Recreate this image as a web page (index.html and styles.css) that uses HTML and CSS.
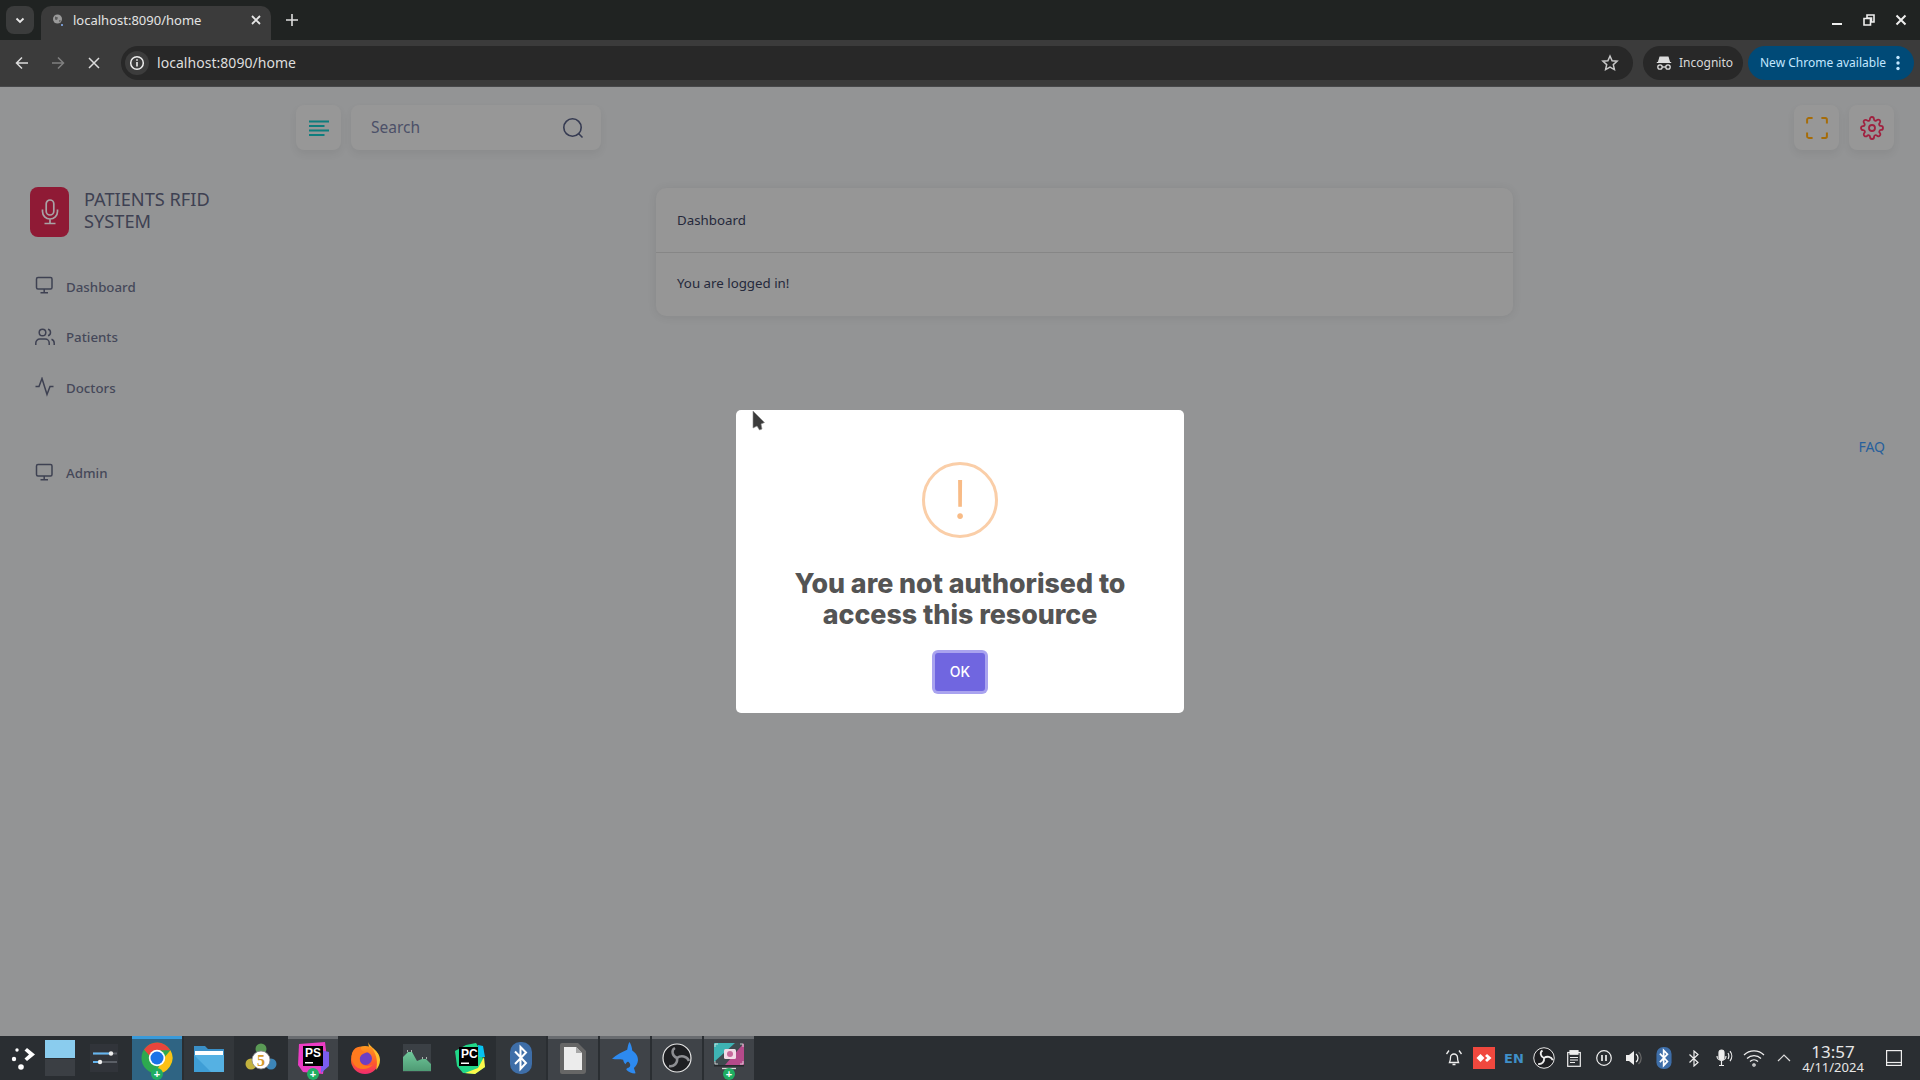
FILE: index.html
```html
<!DOCTYPE html>
<html lang="en">
<head>
<meta charset="utf-8">
<title>localhost:8090/home</title>
<link rel="stylesheet" href="styles.css">
</head>
<body>
<div class="tabstrip">
  <div class="tabsearch"><svg width="12" height="12" viewBox="0 0 12 12"><path d="M2.500 4.500 6 8l3.500-3.500" fill="none" stroke="#e8e8e8" stroke-width="1.800"/></svg></div>
  <div class="tab">
    <svg class="favicon" width="12" height="14" viewBox="0 0 12 14"><circle cx="5.500" cy="6" r="4.500" fill="#9a9a9a"/><path d="M3 3.500l3 1-1 2.500-2-.5zM7 7l2 .5-1.500 2z" fill="#5c5c5c"/><circle cx="10" cy="12" r="1" fill="#8ab4f8"/></svg>
    <span class="tabtitle">localhost:8090/home</span>
    <svg width="12" height="12" viewBox="0 0 12 12"><path d="M2 2l8 8M10 2l-8 8" stroke="#e6e6e6" stroke-width="1.800"/></svg>
  </div>
  <svg class="newtab" width="14" height="14" viewBox="0 0 14 14"><path d="M7 1v12M1 7h12" stroke="#dedede" stroke-width="1.600"/></svg>
  <div class="winctrls">
    <svg width="12" height="12" viewBox="0 0 12 12"><path d="M1 10h10" stroke="#eee" stroke-width="2"/></svg>
    <svg width="12" height="12" viewBox="0 0 12 12"><path d="M4 1h7v7H8.500V4H4z M1 4.500h6.500v6.500H1z" fill="none" stroke="#eee" stroke-width="1.600"/></svg>
    <svg width="12" height="12" viewBox="0 0 12 12"><path d="M1.500 1.500l9 9M10.500 1.500l-9 9" stroke="#eee" stroke-width="2"/></svg>
  </div>
</div>

<div class="toolbar">
  <svg class="navbtn" width="16" height="16" viewBox="0 0 16 16"><path d="M14 8H3M8 2.500 2.500 8 8 13.500" fill="none" stroke="#dcdcdc" stroke-width="1.500"/></svg>
  <svg class="navbtn" width="16" height="16" viewBox="0 0 16 16"><path d="M2 8h11M8 2.500 13.500 8 8 13.500" fill="none" stroke="#808080" stroke-width="1.500"/></svg>
  <svg class="navbtn" width="16" height="16" viewBox="0 0 16 16"><path d="M3 3l10 10M13 3 3 13" stroke="#dcdcdc" stroke-width="1.500"/></svg>
  <div class="omnibox">
    <span class="siteinfo"><svg width="16" height="16" viewBox="0 0 16 16"><circle cx="8" cy="8" r="6.300" fill="none" stroke="#eee" stroke-width="1.500"/><path d="M8 7v4.500M8 4.300v1.500" stroke="#eee" stroke-width="1.600"/></svg></span>
    <span class="url">localhost:8090/home</span>
    <svg class="star" width="18" height="18" viewBox="0 0 18 18"><path d="M9 2l2.100 4.700 5 .5-3.800 3.400 1.100 5L9 13l-4.400 2.600 1.100-5L1.900 7.200l5-.5z" fill="none" stroke="#c8c8c8" stroke-width="1.500"/></svg>
  </div>
  <div class="incognito">
    <svg width="16" height="16" viewBox="0 0 16 16"><path d="M4 2h8l1.300 4.500H2.700zM.8 7.500h14.400" fill="#dcdcdc" stroke="#dcdcdc" stroke-width="1.200"/><circle cx="4" cy="12" r="2.200" fill="none" stroke="#dcdcdc" stroke-width="1.300"/><circle cx="12" cy="12" r="2.200" fill="none" stroke="#dcdcdc" stroke-width="1.300"/><path d="M6.200 12h3.600" stroke="#dcdcdc" stroke-width="1.300"/></svg>
    <span>Incognito</span>
  </div>
  <div class="update">
    <span>New Chrome available</span>
    <svg width="4" height="16" viewBox="0 0 4 16"><circle cx="2" cy="2.500" r="1.700" fill="#c2e7ff"/><circle cx="2" cy="8" r="1.700" fill="#c2e7ff"/><circle cx="2" cy="13.500" r="1.700" fill="#c2e7ff"/></svg>
  </div>
</div>

<main class="page">
  <header class="topbar">
    <button class="iconbtn"><svg width="20" height="16" viewBox="0 0 20 16"><path d="M0 1.500h20M0 6h15.500M0 10.500h20M0 15h15.500" stroke="#0e7d7d" stroke-width="1.800"/></svg></button>
    <div class="search">
      <span class="searchlabel">Search</span>
      <svg width="22" height="22" viewBox="0 0 22 22"><circle cx="10.500" cy="10.500" r="8.700" fill="none" stroke="#363b52" stroke-width="1.600"/><path d="M16.500 16.500l4 4" stroke="#363b52" stroke-width="1.600"/></svg>
    </div>
    <span class="spacer"></span>
    <button class="iconbtn"><svg width="22" height="22" viewBox="0 0 20 20"><path d="M1 6V2.500A1.500 1.500 0 0 1 2.500 1H6M14 1h3.500A1.500 1.500 0 0 1 19 2.500V6M19 14v3.500a1.500 1.500 0 0 1-1.500 1.500H14M6 19H2.500A1.500 1.500 0 0 1 1 17.500V14" fill="none" stroke="#a66c08" stroke-width="1.800"/></svg></button>
    <button class="iconbtn"><svg width="24" height="24" viewBox="0 0 24 24" fill="none" stroke="#a0213f" stroke-width="1.800"><circle cx="12" cy="12" r="3"/><path d="M19.400 15a1.650 1.650 0 0 0 .33 1.820l.06.06a2 2 0 1 1-2.830 2.830l-.06-.06a1.650 1.650 0 0 0-2.820 1.170V21a2 2 0 1 1-4 0v-.09a1.650 1.650 0 0 0-2.820-1.170l-.06.06a2 2 0 1 1-2.830-2.830l.06-.06a1.650 1.650 0 0 0-1.170-2.820H3a2 2 0 1 1 0-4h.09a1.650 1.650 0 0 0 1.170-2.820l-.06-.06a2 2 0 1 1 2.830-2.830l.06.06a1.650 1.650 0 0 0 2.820-1.170V3a2 2 0 1 1 4 0v.09a1.650 1.650 0 0 0 2.820 1.170l.06-.06a2 2 0 1 1 2.830 2.830l-.06.06a1.650 1.650 0 0 0 1.170 2.820H21a2 2 0 1 1 0 4h-.09a1.650 1.650 0 0 0-1.510 1.090z"/></svg></button>
  </header>

  <div class="columns">
    <aside class="sidebar">
      <div class="brand">
        <div class="logo"><svg width="18" height="26" viewBox="0 0 18 26" fill="none" stroke="#a9a3a6" stroke-width="1.700"><rect x="5.200" y="1" width="7.600" height="15" rx="3.800"/><path d="M1.500 10.500v2a7.500 7.500 0 0 0 15 0v-2M9 20v4.500M3.500 24.500h11"/></svg></div>
        <div class="brandname">PATIENTS RFID<br>SYSTEM</div>
      </div>
      <nav class="nav">
        <a class="navitem"><svg width="20" height="20" viewBox="0 0 20 20" fill="none" stroke="#3e4152" stroke-width="1.500"><rect x="1.500" y="1.500" width="15.500" height="11.500" rx="1.500"/><path d="M9.200 13v3.500M5.500 16.700h7.500"/></svg><span>Dashboard</span></a>
        <a class="navitem"><svg width="20" height="20" viewBox="0 0 20 20" fill="none" stroke="#3e4152" stroke-width="1.500"><circle cx="7.500" cy="5.500" r="3.300"/><path d="M.8 18v-2a4 4 0 0 1 4-4h5.400a4 4 0 0 1 4 4v2M13 2.300a3.300 3.300 0 0 1 0 6.400M16.500 12.200a4 4 0 0 1 2.700 3.800v2"/></svg><span>Patients</span></a>
        <a class="navitem"><svg width="20" height="20" viewBox="0 0 20 20" fill="none" stroke="#3e4152" stroke-width="1.500"><path d="M.5 9.500h3.500L7 1.500l5 16 3-8h3.500"/></svg><span>Doctors</span></a>
        <a class="navitem navgap"><svg width="20" height="20" viewBox="0 0 20 20" fill="none" stroke="#3e4152" stroke-width="1.500"><rect x="1.500" y="1.500" width="15.500" height="11.500" rx="1.500"/><path d="M9.200 13v3.500M5.500 16.700h7.500"/></svg><span>Admin</span></a>
      </nav>
    </aside>
    <section class="content">
      <div class="card">
        <div class="cardhead">Dashboard</div>
        <div class="cardbody">You are logged in!</div>
      </div>
      <a class="faq">FAQ</a>
    </section>
  </div>

  <div class="overlay">
    <div class="dialog" role="dialog">
      <div class="warn"><span>!</span></div>
      <h2 class="dialogtitle">You are not authorised to access this resource</h2>
      <button class="okbtn">OK</button>
    </div>
    <svg class="cursor" width="14" height="22" viewBox="0 0 14 22"><path d="M1 1l11.500 11.500L9 14l1 5-2.500 1L5 16l-4 2z" fill="#3c3c3c" stroke="#8a8a8a" stroke-width=".6"/></svg>
  </div>
</main>

<footer class="taskbar">
  <div class="launcher"><svg width="26" height="24" viewBox="0 0 26 24" fill="#fff"><circle cx="7" cy="4" r="1.700"/><circle cx="4" cy="13" r="2.200"/><circle cx="11" cy="21" r="2.800"/><path d="M17 2l8 6.500-8 6.500-2.500-2.500L19 8.500l-4.500-4z"/></svg></div>
  <div class="pager"><span class="desk on"></span><span class="desk"></span></div>
  <div class="tuner"><svg width="28" height="28" viewBox="0 0 28 28"><rect width="28" height="28" fill="#31343a"/><path d="M3 9.500h24M3 18h24" stroke="#5b5f66" stroke-width="2"/><path d="M3 9.500h18M3 18h7" stroke="#64b5f0" stroke-width="2"/><circle cx="21" cy="9.500" r="2.200" fill="#eee"/><circle cx="10" cy="18" r="2.200" fill="#eee"/></svg></div>
  <div class="tasks">
    <div class="task active"><svg width="32" height="32" viewBox="0 0 32 32"><circle cx="16" cy="16" r="15.500" fill="#2da94f"/><path d="M29.400 8.300A15.500 15.500 0 0 1 14 31.400L22 17z" fill="#fbc116"/><path d="M3 7.500A15.500 15.500 0 0 1 29.400 8.300H16a8 8 0 0 0-7.500 5.500z" fill="#e8453c"/><circle cx="16" cy="16" r="8.200" fill="#fff"/><circle cx="16" cy="16" r="6.500" fill="#1a73e8"/></svg><i class="plus">+</i></div>
    <div class="task files"><svg width="32" height="30" viewBox="0 0 32 30"><path d="M1 3h11l3 3h16v22H1z" fill="#3a8fc7"/><path d="M2 8h28v5H2z" fill="#fff"/><path d="M1 12h30v17H1z" fill="#55b1e3"/><path d="M1 12l17 17H1z" fill="#3f9ed6"/></svg></div>
    <div class="task"><svg width="32" height="32" viewBox="0 0 32 32"><circle cx="16" cy="7" r="5.500" fill="#5a9a55"/><circle cx="6" cy="22" r="5.500" fill="#c2b23e"/><circle cx="26" cy="22" r="5.500" fill="#3c85b8"/><circle cx="16" cy="18" r="9" fill="#fff"/><circle cx="16" cy="18" r="9" fill="none" stroke="#888" stroke-width=".8"/><text class="mtglyph" x="16" y="24">5</text></svg></div>
    <div class="task run"><svg width="32" height="32" viewBox="0 0 32 32"><path d="M2 2 28 0l1 8-3 24-20-2-5-7z" fill="#ec3cc4"/><path d="M24 8l8 2v14l-8 7z" fill="#7a5cf0"/><rect x="6" y="4" width="20" height="20" fill="#000"/><text class="psglyph" x="8" y="15">PS</text><rect x="8" y="20" width="8" height="1.500" fill="#fff"/></svg><i class="plus">+</i></div>
    <div class="task"><svg width="30" height="32" viewBox="0 0 30 32"><defs><linearGradient id="ffx" x1="0" y1="0" x2="0" y2="1"><stop offset="0" stop-color="#ff9a1f"/><stop offset=".6" stop-color="#ff5a2a"/><stop offset="1" stop-color="#f02a72"/></linearGradient></defs><path d="M18 0c1 4 9 7 11 16l-8-1z" fill="#ffb52e"/><circle cx="15" cy="18" r="14" fill="url(#ffx)"/><path d="M22 6c5 3 8 7 8 12a15 15 0 0 1-4 10c2-7 1-15-4-22z" fill="#ffc02e"/><circle cx="15.500" cy="16.500" r="6.500" fill="#6d3fc4"/><path d="M2 11C4 6 8 4 11 5c-1 3 2 5 7 5.500-5 .5-9 3-8 8 1 5 7 7 13 4-5 6-15 6-19 0-2-3-3-7-2-11.500z" fill="#ff7a1e"/></svg></div>
    <div class="task"><svg width="28" height="28" viewBox="0 0 28 28"><defs><linearGradient id="mnt" x1="0" y1="0" x2="0" y2="1"><stop offset="0" stop-color="#6fc79a"/><stop offset="1" stop-color="#4f9b74"/></linearGradient></defs><rect width="28" height="28" fill="#3b4045"/><path d="M0 27V13l5-5 4 0 5 9 5-2 4 0 5 5v7z" fill="url(#mnt)"/><path d="M4 7h1M8 7h1M19 14h1M23 14h1" stroke="#cfd6d2" stroke-width="1.500"/></svg></div>
    <div class="task"><svg width="32" height="32" viewBox="0 0 32 32"><path d="M2 9 13 3 23 1l5 8 4 16-10 7-12-1-6-7z" fill="#21d789"/><path d="M25 3l5 1 2 11-6 0z" fill="#07c3f2"/><path d="M25 26l6-11 1 10-10 7-10-1z" fill="#fcf84a"/><rect x="6" y="5" width="19" height="19" fill="#000"/><text class="psglyph" x="8" y="15.500">PC</text><rect x="8" y="20.500" width="8" height="1.500" fill="#fff"/></svg></div>
    <div class="task dim"><svg width="22" height="32" viewBox="0 0 22 32"><rect width="22" height="32" rx="10" fill="#3e6ea8"/><path d="M5 9.500 16 21l-5.500 6V5L16 10.500 5 22" fill="none" stroke="#fff" stroke-width="2"/></svg></div>
    <div class="task run"><svg width="26" height="32" viewBox="0 0 26 32"><path d="M2 1h16l8 8v20a3 3 0 0 1-3 3H2a2 2 0 0 1-2-2V3a2 2 0 0 1 2-2z" fill="#666"/><path d="M4 5h12l6 6v17H4z" fill="#ececec"/><path d="M16 5l6 6h-6z" fill="#a8a8a8"/></svg></div>
    <div class="task run"><svg width="27" height="32" viewBox="0 0 80 95"><path d="M0 50C6 44 14 38 22 34 30 30 38 26 45 23 47 13 48 6 52 0 56 6 59 15 60 25 70 32 78 42 77 55 76 65 71 72 65 77L70 93C62 94 50 91 44 84 40 80 46 77 50 76 56 72 55 64 50 60 46 57 43 60 40 66 36 63 34 58 33 53 24 50 10 53 0 50Z" fill="#2d8af0"/></svg></div>
    <div class="task run"><svg width="30" height="30" viewBox="0 0 30 30"><circle cx="15" cy="15" r="14" fill="#1e1f22" stroke="#e8e8e8" stroke-width="1.200"/><g fill="none" stroke="#8d8e92" stroke-width="2.500"><path d="M15 15C10 13 9 7 13 5"/><path d="M15 15c4-3 10-2 12 3"/><path d="M15 15c1 5-3 9-8 8"/></g></svg></div>
    <div class="task run"><svg width="32" height="32" viewBox="0 0 32 32"><rect x="1" y="1" width="30" height="22" fill="#3f4a4f"/><path d="M1 1h21L1 20z" fill="#3eb4b4"/><path d="M31 1v22H12z" fill="#b54a8a"/><rect x="11" y="7" width="12" height="10" rx="1.500" fill="#f2dbe6"/><circle cx="17" cy="12" r="3" fill="#c76a9c"/><path d="M2 5V2h3M27 2h3v3M2 19v3h3M27 22h3v-3" fill="none" stroke="#e6e6e6" stroke-width=".8"/><rect x="1" y="23" width="30" height="1.500" fill="#26292c"/><path d="M9 26.500h14" stroke="#d8d8d8" stroke-width="1.300"/></svg><i class="plus">+</i></div>
  </div>
  <span class="spacer"></span>
  <div class="tray">
    <span class="ti"><svg width="18" height="18" viewBox="0 0 18 18" fill="none" stroke="#eee" stroke-width="1.300"><path d="M4.500 13.500c1-2 1-3 1-5a3.500 3.500 0 0 1 7 0c0 2 0 3 1 5zM7.500 15.500h3"/><path d="M1.500 5 4 1.500M16.500 5 14 1.500"/></svg></span>
    <span class="ti"><span class="anydesk"><svg width="16" height="10" viewBox="0 0 16 10" fill="#fff"><path d="M4.500 1 8.500 5l-4 4-4-4zM11 1l4.500 4-4.500 4-2-2 2.300-2L9 3z"/></svg></span></span>
    <span class="ti lang">EN</span>
    <span class="ti"><svg width="22" height="22" viewBox="0 0 30 30"><circle cx="15" cy="15" r="14" fill="#1e1f22" stroke="#eee" stroke-width="1.300"/><g fill="none" stroke="#eee" stroke-width="2.500"><path d="M15 15C10 13 9 7 13 5"/><path d="M15 15c4-3 10-2 12 3"/><path d="M15 15c1 5-3 9-8 8"/></g></svg></span>
    <span class="ti"><svg width="14" height="17" viewBox="0 0 14 17" fill="none" stroke="#eee" stroke-width="1.200"><rect x=".7" y="2.500" width="12.600" height="13.800"/><rect x="3" y=".7" width="8" height="3.500" fill="#eee"/><path d="M3 7.500h8M3 10h8M3 12.500h5"/></svg></span>
    <span class="ti"><svg width="16" height="16" viewBox="0 0 16 16" fill="none" stroke="#eee" stroke-width="1.200"><circle cx="8" cy="8" r="7.300"/><path d="M6 5v6M10 5v6" stroke-width="1.700"/></svg></span>
    <span class="ti"><svg width="18" height="16" viewBox="0 0 18 16"><path d="M1 5h3l5-4v14l-5-4H1z" fill="#eee"/><path d="M11 4a5 5 0 0 1 0 8" fill="none" stroke="#eee" stroke-width="1.300"/><path d="M13.500 2a8 8 0 0 1 0 12" fill="none" stroke="#666" stroke-width="1.300"/></svg></span>
    <span class="ti"><svg width="16" height="22" viewBox="0 0 22 32"><rect width="22" height="32" rx="10" fill="#3e6ea8"/><path d="M5 9.500 16 21l-5.500 6V5L16 10.500 5 22" fill="none" stroke="#fff" stroke-width="2.500"/></svg></span>
    <span class="ti"><svg width="12" height="17" viewBox="0 0 12 17"><path d="M1.500 4.500 10 12.500 6 16V1l4 3.500-8.500 8" fill="none" stroke="#eee" stroke-width="1.200"/></svg></span>
    <span class="ti"><svg width="18" height="18" viewBox="0 0 18 18" fill="none" stroke="#eee" stroke-width="1.200"><rect x="4" y="1" width="5" height="10" rx="2.500" fill="#eee"/><path d="M2 7a4.500 4.500 0 0 0 9 0M6.500 12v4M4 16.500h5M13 4a6 6 0 0 1 0 6M15 2a8 8 0 0 1 0 10"/></svg></span>
    <span class="ti"><svg width="22" height="17" viewBox="0 0 22 17" fill="none" stroke="#eee" stroke-width="1.200"><path d="M1 5a14 14 0 0 1 20 0M4 8.500a10 10 0 0 1 14 0M7 11.500a6 6 0 0 1 8 0"/><circle cx="11" cy="15" r="1.200"/></svg></span>
    <span class="ti"><svg width="14" height="8" viewBox="0 0 14 8"><path d="M1 7l6-6 6 6" fill="none" stroke="#ddd" stroke-width="1.200"/></svg></span>
    <div class="clock"><div class="time">13:57</div><div class="date">4/11/2024</div></div>
    <svg width="16" height="16" viewBox="0 0 16 16" fill="none" stroke="#eee" stroke-width="1.200"><rect x=".6" y=".6" width="14.800" height="14.800"/><path d="M.6 12.500h14.800"/></svg>
  </div>
</footer>
</body>
</html>
```

FILE: styles.css
```css
* { box-sizing: border-box; }
html, body { margin: 0; height: 100%; }
body {
  display: flex;
  flex-direction: column;
  height: 100vh;
  overflow: hidden;
  background: #939495;
  font-family: "Noto Sans", sans-serif;
}
svg { display: block; flex: none; }
.spacer { flex: 1; }

/* browser chrome */
.tabstrip {
  height: 40px;
  background: #202322;
  display: flex;
  align-items: flex-end;
  padding-left: 6px;
}
.tabsearch {
  width: 28px;
  height: 28px;
  margin-bottom: 6px;
  border-radius: 8px;
  background: #3b3c3c;
  display: flex;
  align-items: center;
  justify-content: center;
}
.tab {
  width: 230px;
  height: 34px;
  margin-left: 7px;
  padding: 0 9px 6px 11px;
  border-radius: 10px 10px 0 0;
  background: #3b3b3b;
  color: #e3e3e3;
  display: flex;
  align-items: center;
  font-size: 13px;
}
.favicon { margin-right: 9px; }
.tabtitle { flex: 1; }
.newtab { margin: 0 0 13px 14px; }
.winctrls {
  margin-left: auto;
  padding: 0 13px 14px 0;
  display: flex;
  gap: 20px;
}
.toolbar {
  height: 47px;
  background: #3b3b3b;
  display: flex;
  align-items: center;
  padding: 0 6px 1px 14px;
  border-bottom: 1px solid #47484a;
}
.navbtn { margin-right: 20px; }
.navbtn:nth-child(3) { margin-right: 19px; }
.omnibox {
  flex: 1;
  height: 34px;
  margin-right: 10px;
  padding: 0 14px 0 4px;
  border-radius: 17px;
  background: #282828;
  display: flex;
  align-items: center;
}
.siteinfo {
  width: 24px;
  height: 24px;
  border-radius: 50%;
  background: #3c3c3c;
  display: flex;
  align-items: center;
  justify-content: center;
  margin-right: 8px;
}
.url { flex: 1; color: #dedede; font-size: 14px; letter-spacing: .04px; }
.incognito {
  width: 100px;
  height: 34px;
  margin-right: 5px;
  padding-left: 13px;
  gap: 7px;
  border-radius: 17px;
  background: #282828;
  color: #d8d8d8;
  font-size: 12px;
  display: flex;
  align-items: center;
}
.update {
  width: 166px;
  height: 34px;
  padding: 0 14px 0 12px;
  border-radius: 17px;
  background: #004a77;
  color: #c2e7ff;
  font-size: 12px;
  display: flex;
  align-items: center;
  justify-content: space-between;
}

/* application */
.page {
  flex: 1;
  position: relative;
  min-height: 0;
  color: #363b52;
}
.topbar {
  display: flex;
  gap: 10px;
  padding: 18px 26px 0 296px;
}
.iconbtn {
  width: 45px;
  height: 45px;
  padding: 0;
  border: 0;
  border-radius: 8px;
  background: #979797;
  box-shadow: 0 4px 8px rgba(0, 0, 0, .06);
  display: flex;
  align-items: center;
  justify-content: center;
}
.search {
  width: 250px;
  height: 45px;
  padding: 0 17px 0 20px;
  border-radius: 8px;
  background: #979797;
  box-shadow: 0 4px 8px rgba(0, 0, 0, .06);
  display: flex;
  align-items: center;
  justify-content: space-between;
}
.searchlabel { margin-bottom: 2px; font-size: 15.500px; color: #4c5068; }
.columns { display: flex; }
.sidebar { width: 296px; padding: 37px 0 0 30px; }
.brand { display: flex; align-items: center; gap: 15px; }
.logo {
  width: 39px;
  height: 50px;
  border-radius: 8px;
  background: #8f1a35;
  display: flex;
  align-items: center;
  justify-content: center;
}
.brandname { margin-top: -4px; font-size: 18.200px; line-height: 22px; color: #3e4152; }
.nav { margin-top: 24.500px; }
.navitem {
  height: 50.500px;
  padding-left: 5px;
  display: flex;
  align-items: center;
  gap: 11px;
  color: #454859;
  font-size: 13.300px;
  font-weight: 500;
}
.navitem svg { margin-bottom: 1px; }
.navgap { margin-top: 35px; }
.content {
  flex: 1;
  padding: 38px 26px 0 360px;
  display: flex;
  flex-direction: column;
}
.card {
  width: 857px;
  border-radius: 10px;
  background: #969696;
  box-shadow: 0 1px 10px rgba(0, 0, 0, .08);
  font-size: 13.300px;
  color: #25293b;
}
.cardhead { height: 65px; padding: 0 21px 1px; display: flex; align-items: center; border-bottom: 1px solid #868686; }
.cardbody { height: 63px; padding: 0 21px 3px; display: flex; align-items: center; }
.faq {
  align-self: flex-end;
  margin: 121px 9px 0 0;
  font-size: 14px;
  color: #27609c;
}

/* alert */
.overlay {
  position: absolute;
  inset: 0;
  display: flex;
  justify-content: center;
  align-items: flex-start;
  padding-top: 323px;
}
.dialog {
  width: 448px;
  height: 303px;
  padding-top: 52px;
  border-radius: 5px;
  background: #fff;
  display: flex;
  flex-direction: column;
  align-items: center;
}
.warn {
  width: 76px;
  height: 76px;
  border: 3px solid #facea8;
  border-radius: 50%;
  color: #f8bb86;
  font-size: 54px;
  line-height: 70px;
  text-align: center;
  font-family: "Inter", sans-serif;
  font-weight: 300;
}
.dialogtitle {
  margin: 30px 0 0;
  width: 390px;
  text-align: center;
  font-family: "Inter", sans-serif;
  font-size: 26.800px;
  font-weight: 800;
  line-height: 31px;
  color: #545454;
}
.okbtn {
  width: 50px;
  height: 38px;
  margin-top: 23px;
  padding: 0 0 2px;
  border: 0;
  border-radius: 3px;
  background: #7066e0;
  box-shadow: 0 0 0 3px #a9a3ef;
  color: #fff;
  font-family: "Inter", sans-serif;
  font-size: 14px;
  font-weight: 500;
}
.cursor { position: absolute; left: 752px; top: 323px; }

/* taskbar */
.taskbar {
  height: 44px;
  background: #2a2e32;
  display: flex;
  align-items: stretch;
}
.launcher { width: 45px; padding-left: 10px; display: flex; align-items: center; }
.pager { width: 30px; display: flex; flex-direction: column; padding: 4px 0; gap: 1px; }
.desk { flex: 1; background: #3b3f44; }
.desk.on { background: #8accee; }
.tuner { width: 57px; padding-left: 15px; display: flex; align-items: center; }
.tasks { display: flex; gap: 2px; }
.task {
  position: relative;
  width: 50px;
  padding-bottom: 3px;
  display: flex;
  align-items: center;
  justify-content: center;
  border-top: 3px solid transparent;
}
.task.active { background: #2f6483; border-top-color: #3a9ad9; }
.task.files { background: #33373b; }
.task.run { background: #3f4348; border-top-color: #696c70; }
.task.dim { background: #33373b; }
.plus {
  position: absolute;
  left: 19px;
  bottom: 0;
  width: 12px;
  height: 12px;
  border-radius: 50%;
  background: #1fae62;
  color: #fff;
  font: 700 11px/12px "Liberation Sans", sans-serif;
  text-align: center;
}
.psglyph { font: 700 12px "Liberation Sans", sans-serif; fill: #fff; }
.mtglyph { font: 700 16px "Liberation Serif", serif; fill: #d39a2d; text-anchor: middle; }
.tray { display: flex; align-items: center; padding-right: 18px; }
.ti { width: 30px; display: flex; align-items: center; justify-content: center; }
.anydesk {
  width: 22px;
  height: 22px;
  background: #f0483e;
  display: flex;
  align-items: center;
  justify-content: center;
}
.lang { font: 700 13px "DejaVu Sans", sans-serif; color: #3f8fc8; }
.clock { width: 68px; margin-right: 19px; text-align: center; color: #e6e6e6; }
.time { font-size: 17px; line-height: 17px; white-space: nowrap; }
.date { font-size: 13px; line-height: 14px; white-space: nowrap; }
```
